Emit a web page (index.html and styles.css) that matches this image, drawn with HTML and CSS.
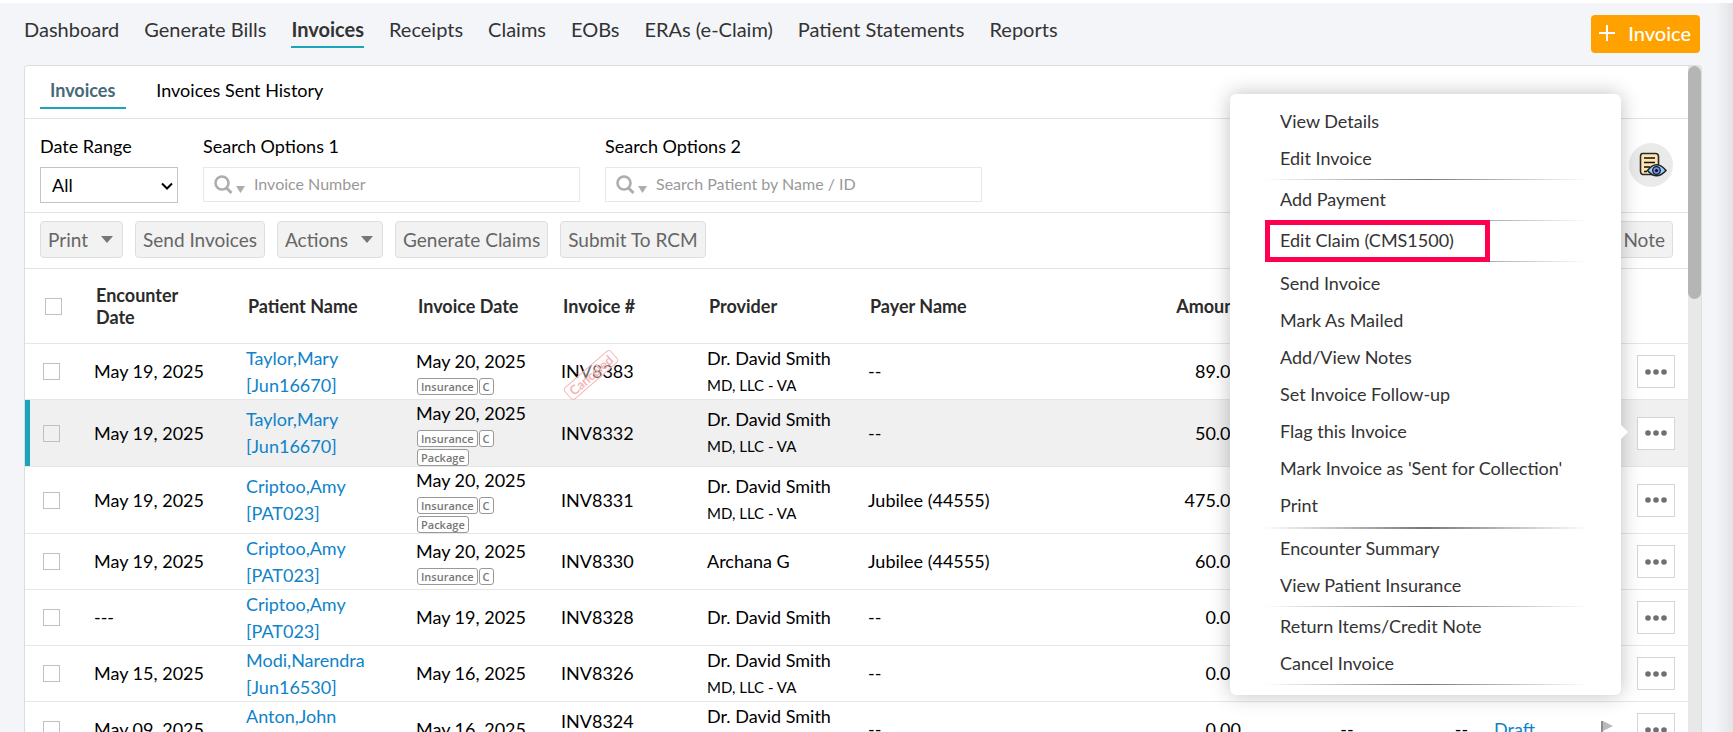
FILE: index.html
```html
<!DOCTYPE html>
<html lang="en">
<head>
<meta charset="utf-8">
<title>Invoices</title>
<link rel="stylesheet" href="styles.css">
</head>
<body>
<svg width="0" height="0" class="sprite" aria-hidden="true">
  <symbol id="search" viewBox="0 0 34 20">
    <circle cx="8" cy="8" r="6.5" fill="none" stroke="#adadad" stroke-width="2.6"/>
    <path d="M12.5 13l5 5" stroke="#adadad" stroke-width="3"/>
    <path d="M22 11h9l-4.500 7z" fill="#adadad"/>
  </symbol>
  <symbol id="dots" viewBox="0 0 24 6">
    <circle cx="3" cy="3" r="2.800"/><circle cx="11" cy="3" r="2.800"/><circle cx="19" cy="3" r="2.800"/>
  </symbol>
</svg>
<header class="topbar">
  <nav class="nav">
    <a href="#">Dashboard</a>
    <a href="#">Generate Bills</a>
    <a href="#" class="current">Invoices</a>
    <a href="#">Receipts</a>
    <a href="#">Claims</a>
    <a href="#">EOBs</a>
    <a href="#">ERAs (e-Claim)</a>
    <a href="#">Patient Statements</a>
    <a href="#">Reports</a>
  </nav>
  <button class="add" type="button"><svg width="16" height="16" viewBox="0 0 16 16"><path d="M8 0v16M0 8h16" stroke="#fff" stroke-width="2"/></svg>Invoice</button>
</header>
<main class="card">
  <div class="content">
    <div class="tabs">
      <a href="#" class="active">Invoices</a>
      <a href="#">Invoices Sent History</a>
    </div>
    <form class="filters">
      <div class="field">
        <label for="range">Date Range</label>
        <div class="select"><select id="range"><option>All</option></select><svg width="12" height="8" viewBox="0 0 12 8"><path d="M1 1.500l5 5 5-5" fill="none" stroke="#000" stroke-width="2"/></svg></div>
      </div>
      <div class="field">
        <label for="s1">Search Options 1</label>
        <div class="search"><svg width="34" height="20"><use href="#search"/></svg><input id="s1" type="text" placeholder="Invoice Number"></div>
      </div>
      <div class="field">
        <label for="s2">Search Options 2</label>
        <div class="search"><svg width="34" height="20"><use href="#search"/></svg><input id="s2" type="text" placeholder="Search Patient by Name / ID"></div>
      </div>
      <button class="view" type="button" aria-label="View list">
        <svg width="28" height="26" viewBox="0 0 28 26">
          <path d="M3.500 1.500h13q3 0 3 3v18h-16q-2-1-2-3v-15q0-3 2-3z" fill="#fee6ae" stroke="#2b2b2b" stroke-width="1.600"/>
          <path d="M5 6h11M5 10.500h11M5 15h6M5 19.500h3" stroke="#111" stroke-width="1.500"/>
          <path d="M8.500 18.500Q17.500 7 27 18.500 17.500 29 8.500 18.500z" fill="#8fd0fb" stroke="#222" stroke-width="1.500"/>
          <circle cx="17.500" cy="18.500" r="3.800" fill="#6f8fd8" stroke="#1c1c30" stroke-width="1.300"/>
          <circle cx="17.500" cy="18.500" r="1.500" fill="#10101c"/>
        </svg>
      </button>
    </form>
    <div class="toolbar">
      <button class="btn" type="button">Print<i class="caret"></i></button>
      <button class="btn" type="button">Send Invoices</button>
      <button class="btn" type="button">Actions<i class="caret"></i></button>
      <button class="btn" type="button">Generate Claims</button>
      <button class="btn" type="button">Submit To RCM</button>
      <button class="btn last" type="button">Add Note</button>
    </div>
    <table class="grid">
      <colgroup><col class="c-check"><col class="c-enc"><col class="c-pat"><col class="c-date"><col class="c-num"><col class="c-prov"><col class="c-payer"><col class="c-amt"><col class="c-paid"><col class="c-bal"><col class="c-status"><col class="c-flag"><col class="c-act"></colgroup>
      <thead>
        <tr><th><input type="checkbox" aria-label="Select all"></th><th>Encounter<br>Date</th><th>Patient Name</th><th>Invoice Date</th><th>Invoice #</th><th>Provider</th><th>Payer Name</th><th class="amt">Amount</th><th></th><th></th><th></th><th></th><th></th></tr>
      </thead>
      <tbody>
        <tr>
          <td><input type="checkbox" aria-label="Select INV8383"></td><td>May 19, 2025</td><td><a href="#">Taylor,Mary<br>[Jun16670]</a></td>
          <td>May 20, 2025<div class="tags"><span>Insurance</span><span>C</span></div></td>
          <td class="num">INV8383<span class="stamp">Canceled</span></td><td>Dr. David Smith<small>MD, LLC - VA</small></td><td>--</td><td class="amt">89.00</td><td></td><td></td><td></td><td></td>
          <td><button class="more" type="button" aria-label="More"><svg width="24" height="6"><use href="#dots"/></svg></button></td>
        </tr>
        <tr class="selected">
          <td><input type="checkbox" aria-label="Select INV8332"></td><td>May 19, 2025</td><td><a href="#">Taylor,Mary<br>[Jun16670]</a></td>
          <td>May 20, 2025<div class="tags"><span>Insurance</span><span>C</span><span>Package</span></div></td>
          <td>INV8332</td><td>Dr. David Smith<small>MD, LLC - VA</small></td><td>--</td><td class="amt">50.00</td><td></td><td></td><td></td><td></td>
          <td><button class="more" type="button" aria-label="More"><svg width="24" height="6"><use href="#dots"/></svg></button></td>
        </tr>
        <tr>
          <td><input type="checkbox" aria-label="Select INV8331"></td><td>May 19, 2025</td><td><a href="#">Criptoo,Amy<br>[PAT023]</a></td>
          <td>May 20, 2025<div class="tags"><span>Insurance</span><span>C</span><span>Package</span></div></td>
          <td>INV8331</td><td>Dr. David Smith<small>MD, LLC - VA</small></td><td>Jubilee (44555)</td><td class="amt">475.00</td><td></td><td></td><td></td><td></td>
          <td><button class="more" type="button" aria-label="More"><svg width="24" height="6"><use href="#dots"/></svg></button></td>
        </tr>
        <tr>
          <td><input type="checkbox" aria-label="Select INV8330"></td><td>May 19, 2025</td><td><a href="#">Criptoo,Amy<br>[PAT023]</a></td>
          <td>May 20, 2025<div class="tags"><span>Insurance</span><span>C</span></div></td>
          <td>INV8330</td><td>Archana G</td><td>Jubilee (44555)</td><td class="amt">60.00</td><td></td><td></td><td></td><td></td>
          <td><button class="more" type="button" aria-label="More"><svg width="24" height="6"><use href="#dots"/></svg></button></td>
        </tr>
        <tr>
          <td><input type="checkbox" aria-label="Select INV8328"></td><td>---</td><td><a href="#">Criptoo,Amy<br>[PAT023]</a></td>
          <td>May 19, 2025</td>
          <td>INV8328</td><td>Dr. David Smith</td><td>--</td><td class="amt">0.00</td><td></td><td></td><td></td><td></td>
          <td><button class="more" type="button" aria-label="More"><svg width="24" height="6"><use href="#dots"/></svg></button></td>
        </tr>
        <tr>
          <td><input type="checkbox" aria-label="Select INV8326"></td><td>May 15, 2025</td><td><a href="#">Modi,Narendra<br>[Jun16530]</a></td>
          <td>May 16, 2025</td>
          <td>INV8326</td><td>Dr. David Smith<small>MD, LLC - VA</small></td><td>--</td><td class="amt">0.00</td><td></td><td></td><td></td><td></td>
          <td><button class="more" type="button" aria-label="More"><svg width="24" height="6"><use href="#dots"/></svg></button></td>
        </tr>
        <tr>
          <td><input type="checkbox" aria-label="Select INV8324"></td><td>May 09, 2025</td><td><a href="#">Anton,John<br>[PAT021]</a></td>
          <td>May 16, 2025</td>
          <td class="raised">INV8324</td><td>Dr. David Smith<small>MD, LLC - VA</small></td><td>--</td><td class="amt">0.00</td><td class="mid">--</td><td class="mid">--</td><td><a href="#">Draft</a></td>
          <td class="mid"><svg width="12" height="18" viewBox="0 0 12 18"><path d="M1 3v15" stroke="#8d8d8d" stroke-width="2"/><path d="M2 3l10 5-10 5z" fill="#b9b9b9"/></svg></td>
          <td><button class="more" type="button" aria-label="More"><svg width="24" height="6"><use href="#dots"/></svg></button></td>
        </tr>
      </tbody>
    </table>
  </div>
  <div class="scrollbar"><div class="thumb"></div></div>
</main>
<div class="menu">
  <ul>
    <li><button type="button">View Details</button></li>
    <li><button type="button">Edit Invoice</button></li>
  </ul>
  <ul>
    <li><button type="button">Add Payment</button></li>
  </ul>
  <ul>
    <li class="marked"><button type="button">Edit Claim (CMS1500)</button></li>
  </ul>
  <ul class="main">
    <li><button type="button">Send Invoice</button></li>
    <li><button type="button">Mark As Mailed</button></li>
    <li><button type="button">Add/View Notes</button></li>
    <li><button type="button">Set Invoice Follow-up</button></li>
    <li><button type="button">Flag this Invoice</button></li>
    <li><button type="button">Mark Invoice as 'Sent for Collection'</button></li>
    <li><button type="button">Print</button></li>
  </ul>
  <ul>
    <li><button type="button">Encounter Summary</button></li>
    <li><button type="button">View Patient Insurance</button></li>
  </ul>
  <ul>
    <li><button type="button">Return Items/Credit Note</button></li>
    <li><button type="button">Cancel Invoice</button></li>
  </ul>
</div>
</body>
</html>
```
FILE: styles.css
```css
*, *::before, *::after { box-sizing: border-box; }
body {
  margin: 0;
  height: 100vh;
  display: flex;
  flex-direction: column;
  position: relative;
  overflow: hidden;
  padding: 0 31px 0 24px;
  background: linear-gradient(to left, #e4e4e6, #f4f5f9 18px);
  font: 18px/27px Lato, sans-serif;
  color: #000;
}
button, input, select { font: inherit; color: inherit; }
a { color: #0f83c9; text-decoration: none; }
.sprite { position: absolute; }

.topbar {
  display: flex;
  justify-content: space-between;
  align-items: flex-start;
  margin: 0 -31px 0 -24px;
  padding: 12px 33px 12px 24px;
  border-top: 3px solid #e0e0e0;
  border-image: linear-gradient(#fff 60%, #dcdcdc 60%) 3;
}
.nav { display: flex; gap: 25px; font-size: 20px; }
.nav a { color: #333; padding: 1px 0 3px; line-height: 27px; border-bottom: 2px solid transparent; }
.nav .current { font-weight: 700; border-color: #1ba5bb; }
.add {
  display: flex;
  align-items: center;
  gap: 13px;
  height: 38px;
  padding: 0 9px 2px 8px;
  border: 0;
  border-radius: 4px;
  background: #ffa200;
  color: #fff;
  font-size: 20px;
  font-weight: 500;
}

.card {
  flex: 1;
  min-height: 0;
  display: flex;
  overflow: hidden;
  border: 1px solid #dcdde1;
  border-bottom: 0;
  border-radius: 4px 4px 0 0;
  background: #fff;
}
.content { flex: 1; min-width: 0; }
.scrollbar { width: 13px; background: #e8e8e8; }
.thumb { height: 35%; border-radius: 7px; background: #b5b5b5; }

.tabs {
  display: flex;
  gap: 19px;
  padding: 7px 15px 9px;
  border-bottom: 1px solid #e2e2e2;
}
.tabs a { padding: 4px 11px 3px; color: #000; border-bottom: 2px solid transparent; }
.tabs .active { padding-left: 10px; color: #47697a; font-weight: 700; border-color: #1ba5bb; }

.filters {
  display: flex;
  gap: 25px;
  padding: 14px 15px 9px;
  border-bottom: 1px solid #e2e2e2;
}
.field { display: flex; flex-direction: column; gap: 7px; }
.select { position: relative; }
.select svg { position: absolute; right: 5px; top: 15px; }
select {
  width: 138px;
  height: 36px;
  padding: 0 11px;
  border: 1px solid #c4c4c4;
  background: #fff;
  appearance: none;
}
.search {
  display: flex;
  align-items: center;
  gap: 6px;
  width: 377px;
  height: 35px;
  padding-left: 10px;
  border: 1px solid #e8e8e8;
}
.search input { flex: 1; min-width: 0; padding: 0 0 2px; border: 0; outline: 0; background: none; font-size: 16px; }
.search input::placeholder { color: #999; }
.view {
  display: flex;
  align-items: center;
  justify-content: center;
  width: 44px;
  height: 44px;
  margin: 10px 0 0 auto;
  padding: 0 0 0 3px;
  border: 0;
  border-radius: 50%;
  background: #eaeaea;
}

.toolbar {
  display: flex;
  gap: 12px;
  padding: 8px 15px 10px;
  border-bottom: 1px solid #e2e2e2;
}
.btn {
  display: flex;
  align-items: center;
  gap: 13px;
  height: 37px;
  padding: 0 7px;
  border: 1px solid #dedede;
  border-radius: 4px;
  background: #f2f2f2;
  color: #666;
  font-size: 19px;
}
.btn .caret { margin-right: 2px; border: 6px solid transparent; border-top: 7px solid #777; border-bottom: 0; }
.last { margin-left: auto; }

.grid { width: 100%; table-layout: fixed; border-collapse: separate; border-spacing: 0; }
.c-check { width: 69px; }
.c-enc { width: 152px; }
.c-pat { width: 170px; }
.c-date { width: 145px; }
.c-num { width: 146px; }
.c-prov { width: 161px; }
.c-amt { width: 237px; }
.c-paid { width: 164px; }
.c-bal { width: 65px; }
.c-status { width: 96px; }
.c-flag { width: 34px; }
.c-act { width: 64px; }
.grid th, .grid td { padding: 0; text-align: left; vertical-align: middle; white-space: nowrap; border-bottom: 1px solid #e6e6e6; }
.grid th { height: 75px; padding-left: 2px; line-height: 22px; color: #2b2b2b; }
.grid td { height: 56px; }
.grid .amt { text-align: right; padding-right: 24px; }
.grid .mid { text-align: center; }
.grid td.raised { padding-bottom: 17px; }
.grid small { display: block; font-size: 15px; }
.grid td:first-child { padding-left: 18px; }
.grid th:first-child { padding-left: 20px; }
.grid input {
  display: block;
  appearance: none;
  width: 17px;
  height: 17px;
  margin: 0;
  border: 1px solid #c0c0c0;
}
.selected td { background: #f0f0f0; }
.selected td:first-child { box-shadow: inset 5px 0 #1ba5bb; }
.tags { display: flex; flex-wrap: wrap; gap: 2px 1px; width: 90px; padding: 3px 0 0 1px; }
.tags span {
  height: 17px;
  padding: 0 3px;
  border: 1px solid #999;
  border-radius: 3px;
  background: #fff;
  color: #777;
  font: 600 11px/15px "Open Sans", sans-serif;
}
.num { position: relative; }
.stamp {
  position: absolute;
  left: -1px;
  top: 23px;
  width: 62px;
  height: 16px;
  border: 1px solid #f5b5b8;
  border-radius: 4px;
  background: rgba(255, 255, 255, .4);
  color: #f4b5b8;
  font-size: 13px;
  font-weight: 700;
  line-height: 14px;
  text-align: center;
  transform: rotate(-41deg);
}
.more {
  display: flex;
  align-items: center;
  justify-content: center;
  width: 38px;
  height: 33px;
  margin-left: 13px;
  padding: 0 0 0 2px;
  border: 1px solid #d6d6d6;
  background: #fff;
  fill: #707070;
}

.menu {
  position: absolute;
  top: 94px;
  right: 112px;
  width: 391px;
  padding: 9px 33px;
  border-radius: 6px;
  background: #fff;
  box-shadow: 0 0 20px rgba(0, 0, 0, .25);
}
.menu::after {
  content: "";
  position: absolute;
  left: 100%;
  top: 331px;
  border: 7px solid transparent;
  border-left-color: #fff;
  border-right: 0;
}
.menu ul {
  list-style: none;
  margin: 0 0 1px;
  padding: 0 0 3px;
  background: linear-gradient(to right, transparent, #777, transparent) bottom / 100% 1px no-repeat;
}
.menu .main { padding: 2px 0 5px; background-size: 100% 2px; }
.menu li { position: relative; }
.menu button {
  display: block;
  width: 100%;
  padding: 5px 17px;
  border: 0;
  background: none;
  color: #333;
  text-align: left;
}
.marked::after {
  content: "";
  position: absolute;
  left: 2px;
  top: -2px;
  width: 225px;
  height: 42px;
  border: 5px solid #ff004f;
}
```
